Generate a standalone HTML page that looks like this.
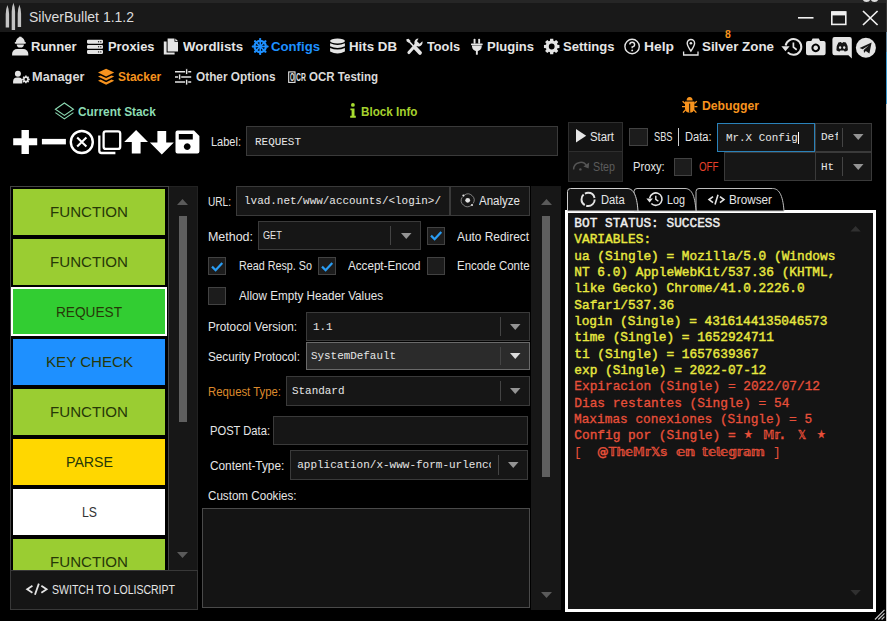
<!DOCTYPE html>
<html lang="en">
<head>
<meta charset="utf-8">
<title>SilverBullet 1.1.2</title>
<style>
html,body{margin:0;padding:0;background:#000;}
body{width:887px;height:621px;position:relative;overflow:hidden;font-family:"Liberation Sans",sans-serif;}
.b{position:absolute;box-sizing:border-box;}
.i{position:absolute;display:block;overflow:visible;}
.t{position:absolute;white-space:pre;transform-origin:0 50%;display:block;}
.c{position:absolute;overflow:hidden;}
</style>
</head>
<body>
<div class="b " style="left:0px;top:0px;width:887px;height:32px;background:#191919;"></div>
<div class="b " style="left:0px;top:0px;width:887px;height:2.6px;background:#262626;"></div>
<div class="b " style="left:246px;top:125.8px;width:312px;height:30px;background:#161616;border:1px solid #3a3a3a;"></div>
<div class="b " style="left:168px;top:186px;width:30px;height:385px;background:#171717;border:1px solid #222;"></div>
<div class="b " style="left:10px;top:186px;width:158.8px;height:385px;background:#000;border:1px solid #444;"></div>
<div class="b " style="left:12.8px;top:188.5px;width:152.6px;height:46px;background:#9acd32;"></div>
<div class="b " style="left:12.8px;top:238.58px;width:152.6px;height:46px;background:#9acd32;"></div>
<div class="b " style="left:10.6px;top:287.06px;width:156.6px;height:49.2px;background:#ffffff;"></div>
<div class="b " style="left:12.8px;top:289.06px;width:152.4px;height:45.2px;background:#32cd32;"></div>
<div class="b " style="left:12.8px;top:338.74px;width:152.6px;height:46px;background:#1e90ff;"></div>
<div class="b " style="left:12.8px;top:388.82px;width:152.6px;height:46px;background:#9acd32;"></div>
<div class="b " style="left:12.8px;top:438.9px;width:152.6px;height:46px;background:#ffd700;"></div>
<div class="b " style="left:12.8px;top:488.98px;width:152.6px;height:46px;background:#ffffff;"></div>
<div class="b " style="left:12.8px;top:539.06px;width:152.6px;height:30.94px;background:#9acd32;"></div>
<div class="b " style="left:179px;top:215.6px;width:8px;height:206.4px;background:#5f5f5f;"></div>
<div class="b " style="left:10.2px;top:570px;width:187.8px;height:39.5px;background:#151515;border:1px solid #383838;"></div>
<div class="b " style="left:236px;top:186px;width:214px;height:29.5px;background:#161616;border:1px solid #3a3a3a;"></div>
<div class="b " style="left:450.3px;top:186px;width:79.5px;height:29.5px;background:#161616;border:1px solid #3a3a3a;"></div>
<div class="b " style="left:257.6px;top:221.3px;width:163px;height:29px;background:#161616;border:1px solid #3a3a3a;"></div>
<div class="b " style="left:390px;top:226.3px;width:1px;height:19px;background:#444;"></div>
<div class="b " style="left:426.8px;top:226.9px;width:18.3px;height:18.3px;background:#1c1c1c;border:1px solid #424242;"></div>
<div class="b " style="left:208.1px;top:257px;width:18.3px;height:18.3px;background:#1c1c1c;border:1px solid #424242;"></div>
<div class="b " style="left:317.8px;top:257px;width:18.3px;height:18.3px;background:#1c1c1c;border:1px solid #424242;"></div>
<div class="b " style="left:426.8px;top:257px;width:18.3px;height:18.3px;background:#1c1c1c;border:1px solid #424242;"></div>
<div class="b " style="left:208.1px;top:286.8px;width:18.3px;height:18.3px;background:#1c1c1c;border:1px solid #424242;"></div>
<div class="b " style="left:305.5px;top:311.7px;width:224.3px;height:29.3px;background:#161616;border:1px solid #3a3a3a;"></div>
<div class="b " style="left:499.5px;top:316.7px;width:1px;height:19.3px;background:#444;"></div>
<div class="b " style="left:305.5px;top:341.5px;width:224.3px;height:28.8px;background:#2b2b2b;border:1px solid #6a6a6a;"></div>
<div class="b " style="left:499.5px;top:346.5px;width:1px;height:18.8px;background:#444;"></div>
<div class="b " style="left:285.5px;top:376.3px;width:244.3px;height:29.3px;background:#161616;border:1px solid #3a3a3a;"></div>
<div class="b " style="left:499.5px;top:381.3px;width:1px;height:19.3px;background:#444;"></div>
<div class="b " style="left:273.4px;top:416px;width:254.3px;height:29px;background:#161616;border:1px solid #3a3a3a;"></div>
<div class="b " style="left:289.7px;top:450.4px;width:238px;height:29.3px;background:#161616;border:1px solid #3a3a3a;"></div>
<div class="b " style="left:497.5px;top:455.4px;width:1px;height:19.3px;background:#444;"></div>
<div class="b " style="left:202px;top:508px;width:327.7px;height:100px;background:#141414;border:1px solid #4a4a4a;"></div>
<div class="b " style="left:531.3px;top:186px;width:29.7px;height:423.5px;background:#171717;"></div>
<div class="b " style="left:542px;top:215.8px;width:8.1px;height:261px;background:#5f5f5f;"></div>
<div class="b " style="left:568.1px;top:122.2px;width:55.1px;height:29.6px;background:#131313;border:1px solid #2e2e2e;"></div>
<div class="b " style="left:568.1px;top:151px;width:55.1px;height:30.6px;background:#1b1b1b;border:1px solid #2e2e2e;"></div>
<div class="b " style="left:629.3px;top:127.8px;width:18.3px;height:18.3px;background:#1c1c1c;border:1px solid #424242;"></div>
<div class="b " style="left:678.2px;top:128px;width:1.2px;height:17.5px;background:#d0d0d0;"></div>
<div class="b " style="left:716.9px;top:122.5px;width:98px;height:29.5px;background:#161616;border:1px solid #2a82ba;"></div>
<div class="b " style="left:798.3px;top:132px;width:1px;height:12.2px;background:#fff;"></div>
<div class="b " style="left:815.4px;top:122.5px;width:56.8px;height:29.5px;background:#161616;border:1px solid #3a3a3a;"></div>
<div class="b " style="left:842.1px;top:127.5px;width:1px;height:19.5px;background:#444;"></div>
<div class="b " style="left:674px;top:157.8px;width:18.3px;height:18.3px;background:#1c1c1c;border:1px solid #424242;"></div>
<div class="b " style="left:724.4px;top:152.4px;width:91.5px;height:29px;background:#161616;border:1px solid #3a3a3a;"></div>
<div class="b " style="left:815.4px;top:152.4px;width:56.8px;height:29px;background:#161616;border:1px solid #3a3a3a;"></div>
<div class="b " style="left:842.1px;top:157.4px;width:1px;height:19px;background:#444;"></div>
<div class="b " style="left:565.3px;top:210px;width:310.8px;height:401.7px;background:#141414;border:3.6px solid #ffffff;"></div>
<div class="b " style="left:886px;top:0px;width:1px;height:32px;background:#383838;"></div>
<div class="b " style="left:886px;top:32px;width:1px;height:20px;background:#5e7e94;"></div>
<div class="b " style="left:886px;top:52px;width:1px;height:51.5px;background:#3f9bd0;"></div>
<div class="b " style="left:886px;top:103.5px;width:1px;height:517.5px;background:#cfcfcf;"></div>
<svg class="i" style="left:177.3px;top:198.5px;" width="11" height="6" viewBox="0 0 11 6"><path d="M0 6 L5.5 0 L11 6Z" fill="#5a5a5a"/></svg>
<svg class="i" style="left:177.3px;top:552px;" width="11" height="6" viewBox="0 0 11 6"><path d="M0 0 L5.5 6 L11 0Z" fill="#5a5a5a"/></svg>
<svg class="i" style="left:401.25px;top:233.0px;" width="10.5" height="6" viewBox="0 0 10.5 6"><path d="M0 0 L10.5 0 L5.25 6Z" fill="#949494"/></svg>
<svg class="i" style="left:429.8px;top:230.4px;" width="12.3" height="11.3" viewBox="0 0 12 10"><path d="M1 5 L4.5 8.5 L11 1.5" fill="none" stroke="#2a9df4" stroke-width="2.2"/></svg>
<svg class="i" style="left:211.1px;top:260.5px;" width="12.3" height="11.3" viewBox="0 0 12 10"><path d="M1 5 L4.5 8.5 L11 1.5" fill="none" stroke="#2a9df4" stroke-width="2.2"/></svg>
<svg class="i" style="left:320.8px;top:260.5px;" width="12.3" height="11.3" viewBox="0 0 12 10"><path d="M1 5 L4.5 8.5 L11 1.5" fill="none" stroke="#2a9df4" stroke-width="2.2"/></svg>
<svg class="i" style="left:509.75px;top:323.55px;" width="10.5" height="6" viewBox="0 0 10.5 6"><path d="M0 0 L10.5 0 L5.25 6Z" fill="#949494"/></svg>
<svg class="i" style="left:509.75px;top:353.1px;" width="10.5" height="6" viewBox="0 0 10.5 6"><path d="M0 0 L10.5 0 L5.25 6Z" fill="#dcdcdc"/></svg>
<svg class="i" style="left:509.75px;top:388.15px;" width="10.5" height="6" viewBox="0 0 10.5 6"><path d="M0 0 L10.5 0 L5.25 6Z" fill="#949494"/></svg>
<svg class="i" style="left:507.75px;top:462.25px;" width="10.5" height="6" viewBox="0 0 10.5 6"><path d="M0 0 L10.5 0 L5.25 6Z" fill="#949494"/></svg>
<svg class="i" style="left:540.5px;top:198.5px;" width="11" height="6" viewBox="0 0 11 6"><path d="M0 6 L5.5 0 L11 6Z" fill="#5a5a5a"/></svg>
<svg class="i" style="left:540.5px;top:592px;" width="11" height="6" viewBox="0 0 11 6"><path d="M0 0 L5.5 6 L11 0Z" fill="#5a5a5a"/></svg>
<svg class="i" style="left:575.6px;top:129.3px;" width="10.2" height="13.4" viewBox="0 0 10.2 13.4"><path d="M0 0 L10.2 6.7 L0 13.4Z" fill="#e6e6e6"/></svg>
<svg class="i" style="left:852.75px;top:134.45px;" width="10.5" height="6" viewBox="0 0 10.5 6"><path d="M0 0 L10.5 0 L5.25 6Z" fill="#949494"/></svg>
<svg class="i" style="left:852.75px;top:164.1px;" width="10.5" height="6" viewBox="0 0 10.5 6"><path d="M0 0 L10.5 0 L5.25 6Z" fill="#949494"/></svg>
<svg class="i" style="left:0;top:0" width="887" height="621" viewBox="0 0 887 621"><path d="M696 211 L696 191.5 Q696 188.5 699 188.5 L772.5 188.5 C778.5 188.5 782.8 194 784 211 Z" fill="#000" stroke="#bdbdbd" stroke-width="1"/><path d="M634 211 L634 191.5 Q634 188.5 637 188.5 L685 188.5 C691 188.5 694.8 194 696 211 Z" fill="#000" stroke="#bdbdbd" stroke-width="1"/><path d="M567.5 211 L567.5 191.5 Q567.5 188.5 570.5 188.5 L627 188.5 C633 188.5 636.8 194 638 211 Z" fill="#141414" stroke="#d0d0d0" stroke-width="1"/></svg>
<svg class="i" style="left:850.4px;top:226px;" width="11.2" height="5.6" viewBox="0 0 11 6"><path d="M0 6 L5.5 0 L11 6Z" fill="#303030"/></svg>
<svg class="i" style="left:850.4px;top:590px;" width="11.2" height="5.6" viewBox="0 0 11 6"><path d="M0 0 L5.5 6 L11 0Z" fill="#303030"/></svg>
<svg class="i" style="left:874.2px;top:609.3px;" width="10.5" height="10.5" viewBox="0 0 11 11"><path d="M1 11 L11 1 M4.5 11 L11 4.5 M8 11 L11 8" stroke="#c8c8c8" stroke-width="1.2"/></svg>
<svg class="i" style="left:0;top:0" width="887" height="621" viewBox="0 0 887 621"><path d="M5.7 27.4 L5.7 14.1 Q6.1 8.1 7.4 5.1 Q8.7 8.1 9.1 14.1 L9.1 27.4 Z" fill="#c4c4c4"/><path d="M11.7 30.1 L11.7 11.7 Q12.1 5.7 13.4 2.7 Q14.7 5.7 15.1 11.7 L15.1 30.1 Z" fill="#c4c4c4"/><path d="M17.7 27 L17.7 13.7 Q18.1 7.7 19.4 4.7 Q20.7 7.7 21.1 13.7 L21.1 27 Z" fill="#c4c4c4"/><path d="M798 17.8 H813.5" stroke="#f0f0f0" stroke-width="1.6"/><rect x="831.8" y="12" width="14" height="12.4" fill="none" stroke="#f0f0f0" stroke-width="1.6"/><rect x="831.8" y="11.4" width="14" height="4" fill="#f0f0f0"/><path d="M863 11 L877.6 25 M877.6 11 L863 25" stroke="#f0f0f0" stroke-width="1.7"/><circle cx="866.5" cy="-2" r="4" fill="#ddd"/><circle cx="874.5" cy="-2" r="4" fill="#ddd"/><g fill="#e4e4e4"><path d="M15.8 42.3 A4.5 5.2 0 0 1 24.8 42.3 Z"/><rect x="19.2" y="36.7" width="2.2" height="3"/><rect x="14.7" y="41.9" width="11.2" height="1.8" rx="0.9"/><path d="M16.7 44.5 H23.9 A3.6 3.1 0 0 1 16.7 44.5 Z"/><path d="M12.1 55.6 V54 A5 5 0 0 1 17.1 49 H23.3 A5 5 0 0 1 28.3 54 V55.6 Z"/></g><rect x="87" y="39.8" width="16" height="3.9" rx="1.1" fill="#e4e4e4"/><circle cx="98.6" cy="41.7" r="0.7" fill="#222"/><circle cx="100.8" cy="41.7" r="0.7" fill="#222"/><rect x="87" y="44.9" width="16" height="3.9" rx="1.1" fill="#e4e4e4"/><circle cx="98.6" cy="46.8" r="0.7" fill="#222"/><circle cx="100.8" cy="46.8" r="0.7" fill="#222"/><rect x="87" y="50.0" width="16" height="3.9" rx="1.1" fill="#e4e4e4"/><circle cx="98.6" cy="51.9" r="0.7" fill="#222"/><circle cx="100.8" cy="51.9" r="0.7" fill="#222"/><g fill="#e4e4e4"><path d="M167.6 38.5 H174.5 V41.8 H178 V51.6 H167.6 Z"/><path d="M175.3 38.6 L177.9 41.1 H175.3 Z"/><path d="M163.8 41.6 H166.6 V52.6 H174.6 V54.4 H163.8 Z"/></g><g stroke="#1e90ff" fill="none"><circle cx="260.2" cy="46.5" r="5.7" stroke-width="2.2"/><g stroke-width="1.6"><path d="M260.2 46.5 L268.10 46.50" /><path d="M260.2 46.5 L265.79 52.09" /><path d="M260.2 46.5 L260.20 54.40" /><path d="M260.2 46.5 L254.61 52.09" /><path d="M260.2 46.5 L252.30 46.50" /><path d="M260.2 46.5 L254.61 40.91" /><path d="M260.2 46.5 L260.20 38.60" /><path d="M260.2 46.5 L265.79 40.91" /></g><circle cx="267.60" cy="46.50" r="1.1" fill="#1e90ff" stroke="none"/><circle cx="265.43" cy="51.73" r="1.1" fill="#1e90ff" stroke="none"/><circle cx="260.20" cy="53.90" r="1.1" fill="#1e90ff" stroke="none"/><circle cx="254.97" cy="51.73" r="1.1" fill="#1e90ff" stroke="none"/><circle cx="252.80" cy="46.50" r="1.1" fill="#1e90ff" stroke="none"/><circle cx="254.97" cy="41.27" r="1.1" fill="#1e90ff" stroke="none"/><circle cx="260.20" cy="39.10" r="1.1" fill="#1e90ff" stroke="none"/><circle cx="265.43" cy="41.27" r="1.1" fill="#1e90ff" stroke="none"/><circle cx="260.2" cy="46.5" r="1.8" fill="#1e90ff" stroke="none"/></g><g fill="#e4e4e4"><ellipse cx="337.5" cy="41" rx="7.4" ry="2.4"/><path d="M330.1 43.2 Q337.5 46.6 344.9 43.2 V46.2 Q337.5 49.8 330.1 46.2 Z"/><path d="M330.1 47.9 Q337.5 51.3 344.9 47.9 V51.6 Q337.5 55.6 330.1 51.6 Z"/></g><g stroke="#e4e4e4" stroke-linecap="round" fill="none"><path d="M408 40.4 L413.4 46" stroke-width="1.7" stroke-linecap="butt"/><path d="M414.8 47.4 L420 52.9" stroke-width="3.8"/><path d="M416.8 43.8 L408.9 52.6" stroke-width="3"/></g><path d="M406.3 39.2 L408.6 38.7 L410.6 40.9 L408.8 42.8 L406.6 41.2 Z" fill="#e4e4e4"/><path d="M422.4 41.3 A4.1 4.1 0 1 1 418.5 38.4 L417 41.2 L419.7 43.7 Z" fill="#e4e4e4"/><g fill="#e4e4e4"><rect x="473.6" y="38.8" width="1.9" height="5" rx="0.8"/><rect x="478.2" y="38.8" width="1.9" height="5" rx="0.8"/><rect x="471" y="43.4" width="11.7" height="1.8" rx="0.6"/><path d="M472 45.4 H481.7 V46.6 A4.85 4.6 0 0 1 472 46.6 Z"/><rect x="475.9" y="50" width="1.9" height="4.7"/></g><path d="M559.45 44.96 L559.45 48.04 L557.44 48.24 L556.99 49.33 L558.27 50.89 L556.09 53.07 L554.53 51.79 L553.44 52.24 L553.24 54.25 L550.16 54.25 L549.96 52.24 L548.87 51.79 L547.31 53.07 L545.13 50.89 L546.41 49.33 L545.96 48.24 L543.95 48.04 L543.95 44.96 L545.96 44.76 L546.41 43.67 L545.13 42.11 L547.31 39.93 L548.87 41.21 L549.96 40.76 L550.16 38.75 L553.24 38.75 L553.44 40.76 L554.53 41.21 L556.09 39.93 L558.27 42.11 L556.99 43.67 L557.44 44.76 Z M554.6 46.5 A2.9 2.9 0 1 0 548.8 46.5 A2.9 2.9 0 1 0 554.6 46.5 Z" fill="#e4e4e4" fill-rule="evenodd"/><circle cx="632.1" cy="46.5" r="7.2" fill="none" stroke="#e4e4e4" stroke-width="1.4"/><path d="M629.8 44.6 A2.4 2.3 0 1 1 632.2 46.9 V48.3" fill="none" stroke="#e4e4e4" stroke-width="1.4"/><circle cx="632.2" cy="50.4" r="0.95" fill="#e4e4e4"/><path d="M690.9 51 C688.5 47.5 687.2 45.4 687.2 43.2 A3.7 3.7 0 0 1 694.6 43.2 C694.6 45.4 693.3 47.5 690.9 51 Z" fill="none" stroke="#e4e4e4" stroke-width="1.4"/><circle cx="690.9" cy="43.2" r="1.3" fill="#e4e4e4"/><path d="M683.6 51.6 V55 H698 V51.6" fill="none" stroke="#e4e4e4" stroke-width="1.3"/><path d="M785.62 45.53 A7.9 7.9 0 1 1 787.71 52.43" fill="none" stroke="#e4e4e4" stroke-width="2.0"/><path d="M781.37 46.25 L789.63 46.25 L785.50 51.24 Z" fill="#e4e4e4"/><path d="M793.4 42.55 V47.10 L796.72 49.74" fill="none" stroke="#e4e4e4" stroke-width="1.70"/><path d="M808 41 H811.3 L812.6 38.4 H818.8 L820.1 41 H823.6 Q825.6 41 825.6 43 V53.3 Q825.6 55.3 823.6 55.3 H808 Q806 55.3 806 53.3 V43 Q806 41 808 41 Z M815.7 43.6 A4.3 4.3 0 1 0 815.71 43.6 Z M815.7 45.6 A2.3 2.3 0 1 1 815.69 45.6 Z" fill="#e4e4e4" fill-rule="evenodd"/><path d="M834.6 37 H849.6 Q851.8 37 851.8 39.2 V58.6 L848.4 55.3 H834.6 Q832.4 55.3 832.4 53.1 V39.2 Q832.4 37 834.6 37 Z" fill="#e4e4e4"/><path d="M836.4 50.2 Q836.4 45.2 838.4 42.6 Q840 41.9 841 42 L841.3 42.8 H843 L843.3 42 Q844.3 41.9 845.9 42.6 Q847.9 45.2 847.9 50.2 Q846.3 51.6 844.6 51.6 L843.9 50.5 H840.4 L839.7 51.6 Q838 51.6 836.4 50.2 Z" fill="#151515"/><ellipse cx="840.1" cy="47.6" rx="1.15" ry="1.3" fill="#e4e4e4"/><ellipse cx="844.2" cy="47.6" rx="1.15" ry="1.3" fill="#e4e4e4"/><circle cx="865.9" cy="47.7" r="10" fill="#e4e4e4"/><path d="M859.6 48 L871.6 42.6 L869.4 53.6 L865.8 51 L864 53 L863.7 50 L868.8 45.4 L862.6 49.3 Z" fill="#151515"/><g fill="#e4e4e4"><circle cx="17.9" cy="73.7" r="3"/><path d="M13.1 83.4 V81.6 A4 4 0 0 1 17.1 77.6 H19 A4 4 0 0 1 22.3 79.4 V83.4 Z"/></g><path d="M29.73 78.64 L29.73 80.16 L28.68 80.24 L28.46 80.77 L29.14 81.57 L28.07 82.64 L27.27 81.96 L26.74 82.18 L26.66 83.23 L25.14 83.23 L25.06 82.18 L24.53 81.96 L23.73 82.64 L22.66 81.57 L23.34 80.77 L23.12 80.24 L22.07 80.16 L22.07 78.64 L23.12 78.56 L23.34 78.03 L22.66 77.23 L23.73 76.16 L24.53 76.84 L25.06 76.62 L25.14 75.57 L26.66 75.57 L26.74 76.62 L27.27 76.84 L28.07 76.16 L29.14 77.23 L28.46 78.03 L28.68 78.56 Z M27.2 79.4 A1.3 1.3 0 1 0 24.6 79.4 A1.3 1.3 0 1 0 27.2 79.4 Z" fill="#e4e4e4" fill-rule="evenodd"/><g fill="#f7931e"><path d="M106.1 68.8 L114.2 72.6 L106.1 76.4 L98 72.6 Z"/><path d="M98 76.6 L100.6 75.4 L106.1 78 L111.6 75.4 L114.2 76.6 L106.1 80.5 Z"/><path d="M98 80.8 L100.6 79.6 L106.1 82.2 L111.6 79.6 L114.2 80.8 L106.1 84.8 Z"/></g><g stroke="#e4e4e4" stroke-width="1.5"><path d="M175 71.7 H191.2 M175 76.9 H191.2 M175 82.1 H191.2"/></g><g fill="#e4e4e4" stroke="#000" stroke-width="0.8"><rect x="185.6" y="68.8" width="2.2" height="5.8"/><rect x="178.6" y="74" width="2.2" height="5.8"/><rect x="185.6" y="79.2" width="2.2" height="5.8"/></g><rect x="288.7" y="71.9" width="6.3" height="10.5" fill="none" stroke="#e4e4e4" stroke-width="1.1"/><g fill="none" stroke="#8ddcb4" stroke-width="1.1"><path d="M64.4 103 L73.4 109.2 L64.4 115.4 L55.4 109.2 Z"/><path d="M55.4 112.6 L64.4 118.9 L73.4 112.6"/></g><g fill="#a8de30"><circle cx="352.9" cy="104.9" r="1.9"/><path d="M350.4 108.4 H354.5 V115.8 H355.8 V117.8 H350.2 V115.8 H351.6 V110.3 H350.4 Z"/></g><g fill="#f7931e"><path d="M686.6 100.6 A3 3.6 0 0 1 692.6 100.6 Z"/><path d="M685 101.6 H694.4 V108.6 A4.7 4 0 0 1 685 108.6 Z"/></g><g stroke="#f7931e" stroke-width="1.3" fill="none"><path d="M685 103.4 L682.6 101.2 M694.4 103.4 L696.8 101.2 M685 106.6 H682 M694.4 106.6 H697.4 M685.6 109.8 L683 112.6 M693.8 109.8 L696.4 112.6"/></g><path d="M689.7 103.6 V112.4" stroke="#000" stroke-width="1"/><path d="M13.2 138.3 H21.5 V129.9 H28.9 V138.3 H37.2 V145.3 H28.9 V154.1 H21.5 V145.3 H13.2 Z" fill="#ffffff"/><rect x="41.9" y="138.9" width="24" height="5.5" fill="#ffffff"/><circle cx="81.8" cy="142" r="11" fill="none" stroke="#ffffff" stroke-width="2.4"/><path d="M77.2 137.6 L86.4 146.4 M86.4 137.6 L77.2 146.4" stroke="#ffffff" stroke-width="2.1"/><rect x="103.6" y="131.3" width="16.6" height="17.6" rx="2.2" fill="none" stroke="#ffffff" stroke-width="2.3"/><path d="M99.3 135.6 V150.8 Q99.3 153 101.5 153 H115.4" fill="none" stroke="#ffffff" stroke-width="2.3"/><path d="M136.1 130 L148 141.9 H140.6 V153.6 H131.8 V141.9 H124.2 Z" fill="#ffffff"/><path d="M161.8 154.6 L173.8 142.6 H166.2 V131 H157.4 V142.6 H149.9 Z" fill="#ffffff"/><path d="M177.5 130.6 H194 L199.4 136 V151.6 Q199.4 153.6 197.4 153.6 H177.5 Q175.5 153.6 175.5 151.6 V132.6 Q175.5 130.6 177.5 130.6 Z M178.8 134 V139.6 H192.8 V134 Z M187.2 143.2 A3.4 3.4 0 1 0 187.21 143.2 Z" fill="#ffffff" fill-rule="evenodd"/><path d="M32.44 585.73 L27.20 589.20 L32.44 592.67 M41.36 585.73 L46.60 589.20 L41.36 592.67 M38.84 583.60 L34.96 594.80" fill="none" stroke="#e4e4e4" stroke-width="1.8"/><path d="M713.05 196.56 L709.00 199.60 L713.05 202.64 M719.95 196.56 L724.00 199.60 L719.95 202.64 M718.00 194.70 L715.00 204.50" fill="none" stroke="#e4e4e4" stroke-width="1.6"/><circle cx="467.7" cy="200.3" r="2.4" fill="#e4e4e4"/><path d="M464.2 195.2 A6.2 6.2 0 0 1 473.2 203.4" fill="none" stroke="#9a9a9a" stroke-width="0.8"/><path d="M471.2 205.4 A6.2 6.2 0 0 1 462.2 197.2" fill="none" stroke="#9a9a9a" stroke-width="0.8"/><circle cx="463.4" cy="195.6" r="1.1" fill="#e4e4e4"/><circle cx="472" cy="205" r="1.1" fill="#e4e4e4"/><path d="M573.6 169.6 A7 7 0 0 1 586.8 166.2" fill="none" stroke="#555" stroke-width="1.5"/><path d="M589.2 162.6 L588.6 168.6 L583.4 166.6 Z" fill="#555"/><circle cx="580.4" cy="169.4" r="1.2" fill="#555"/><circle cx="588.1" cy="199.4" r="6.6" fill="none" stroke="#e4e4e4" stroke-width="1.9" stroke-dasharray="12.2 1.6"/><path d="M649.69 198.02 A6.2 6.2 0 1 1 651.34 203.44" fill="none" stroke="#e4e4e4" stroke-width="1.6"/><path d="M646.36 198.59 L652.84 198.59 L649.60 202.51 Z" fill="#e4e4e4"/><path d="M655.8 195.69 V199.30 L658.40 201.33" fill="none" stroke="#e4e4e4" stroke-width="1.36"/></svg>
<span class="t" id="t0" style="left:29px;top:7.00px;height:20px;line-height:20px;font-size:14.5px;color:#dcdcdc;font-family:'Liberation Sans',sans-serif;transform:scaleX(0.9650);">SilverBullet 1.1.2</span>
<span class="t" id="t1" style="left:31.4px;top:38.00px;height:18px;line-height:18px;font-size:13px;color:#e6e6e6;font-family:'Liberation Sans',sans-serif;font-weight:bold;transform:scaleX(1.0022);">Runner</span>
<span class="t" id="t2" style="left:107.5px;top:38.00px;height:18px;line-height:18px;font-size:13px;color:#e6e6e6;font-family:'Liberation Sans',sans-serif;font-weight:bold;transform:scaleX(0.9897);">Proxies</span>
<span class="t" id="t3" style="left:182.6px;top:38.00px;height:18px;line-height:18px;font-size:13px;color:#e6e6e6;font-family:'Liberation Sans',sans-serif;font-weight:bold;transform:scaleX(1.0169);">Wordlists</span>
<span class="t" id="t4" style="left:270.5px;top:38.00px;height:18px;line-height:18px;font-size:13px;color:#1e90ff;font-family:'Liberation Sans',sans-serif;font-weight:bold;transform:scaleX(1.0126);">Configs</span>
<span class="t" id="t5" style="left:349px;top:38.00px;height:18px;line-height:18px;font-size:13px;color:#e6e6e6;font-family:'Liberation Sans',sans-serif;font-weight:bold;transform:scaleX(1.0223);">Hits DB</span>
<span class="t" id="t6" style="left:426.8px;top:38.00px;height:18px;line-height:18px;font-size:13px;color:#e6e6e6;font-family:'Liberation Sans',sans-serif;font-weight:bold;transform:scaleX(0.9791);">Tools</span>
<span class="t" id="t7" style="left:487px;top:38.00px;height:18px;line-height:18px;font-size:13px;color:#e6e6e6;font-family:'Liberation Sans',sans-serif;font-weight:bold;transform:scaleX(1.0010);">Plugins</span>
<span class="t" id="t8" style="left:563px;top:38.00px;height:18px;line-height:18px;font-size:13px;color:#e6e6e6;font-family:'Liberation Sans',sans-serif;font-weight:bold;transform:scaleX(1.0040);">Settings</span>
<span class="t" id="t9" style="left:643.7px;top:38.00px;height:18px;line-height:18px;font-size:13px;color:#e6e6e6;font-family:'Liberation Sans',sans-serif;font-weight:bold;transform:scaleX(1.0649);">Help</span>
<span class="t" id="t10" style="left:702px;top:38.00px;height:18px;line-height:18px;font-size:13px;color:#e6e6e6;font-family:'Liberation Sans',sans-serif;font-weight:bold;transform:scaleX(1.0274);">Silver Zone</span>
<span class="t" id="t11" style="left:725.4px;top:28.20px;height:14px;line-height:14px;font-size:10px;color:#f7931e;font-family:'Liberation Sans',sans-serif;font-weight:bold;transform:scaleX(1.0427);">8</span>
<span class="t" id="t12" style="left:32px;top:69.00px;height:17px;line-height:17px;font-size:12px;color:#dadada;font-family:'Liberation Sans',sans-serif;font-weight:bold;transform:scaleX(1.0636);">Manager</span>
<span class="t" id="t13" style="left:118.4px;top:69.00px;height:17px;line-height:17px;font-size:12px;color:#f7931e;font-family:'Liberation Sans',sans-serif;font-weight:bold;transform:scaleX(0.9960);">Stacker</span>
<span class="t" id="t14" style="left:195.5px;top:69.00px;height:17px;line-height:17px;font-size:12px;color:#dadada;font-family:'Liberation Sans',sans-serif;font-weight:bold;transform:scaleX(0.9855);">Other Options</span>
<span class="t" id="t15" style="left:308.5px;top:69.00px;height:17px;line-height:17px;font-size:12px;color:#dadada;font-family:'Liberation Sans',sans-serif;font-weight:bold;transform:scaleX(0.9613);">OCR Testing</span>
<span class="t" id="t16" style="left:77.8px;top:104.00px;height:17px;line-height:17px;font-size:12px;color:#8ddcb4;font-family:'Liberation Sans',sans-serif;font-weight:bold;transform:scaleX(0.9885);">Current Stack</span>
<span class="t" id="t17" style="left:361px;top:104.00px;height:17px;line-height:17px;font-size:12px;color:#a6d22e;font-family:'Liberation Sans',sans-serif;font-weight:bold;transform:scaleX(0.9739);">Block Info</span>
<span class="t" id="t18" style="left:702px;top:98.00px;height:17px;line-height:17px;font-size:12px;color:#f7931e;font-family:'Liberation Sans',sans-serif;font-weight:bold;transform:scaleX(1.0176);">Debugger</span>
<span class="t" id="t19" style="left:210.7px;top:133.50px;height:17px;line-height:17px;font-size:12px;color:#e6e6e6;font-family:'Liberation Sans',sans-serif;transform:scaleX(0.9173);">Label:</span>
<span class="t" id="t20" style="left:255px;top:134.50px;height:15px;line-height:15px;font-size:11px;color:#e6e6e6;font-family:'Liberation Mono',monospace;transform:scaleX(0.9953);">REQUEST</span>
<span class="t" id="t21" style="left:50.0px;top:200.70px;height:21px;line-height:21px;font-size:15px;color:#263808;font-family:'Liberation Sans',sans-serif;transform:scaleX(1.0065);">FUNCTION</span>
<span class="t" id="t22" style="left:50.0px;top:250.78px;height:21px;line-height:21px;font-size:15px;color:#263808;font-family:'Liberation Sans',sans-serif;transform:scaleX(1.0065);">FUNCTION</span>
<span class="t" id="t23" style="left:56.0px;top:300.86px;height:21px;line-height:21px;font-size:15px;color:#263808;font-family:'Liberation Sans',sans-serif;transform:scaleX(0.9101);">REQUEST</span>
<span class="t" id="t24" style="left:45.5px;top:350.94px;height:21px;line-height:21px;font-size:15px;color:#263808;font-family:'Liberation Sans',sans-serif;transform:scaleX(1.0067);">KEY CHECK</span>
<span class="t" id="t25" style="left:50.0px;top:401.02px;height:21px;line-height:21px;font-size:15px;color:#263808;font-family:'Liberation Sans',sans-serif;transform:scaleX(1.0065);">FUNCTION</span>
<span class="t" id="t26" style="left:65.5px;top:451.10px;height:21px;line-height:21px;font-size:15px;color:#263808;font-family:'Liberation Sans',sans-serif;transform:scaleX(0.9447);">PARSE</span>
<span class="t" id="t27" style="left:81.5px;top:501.18px;height:21px;line-height:21px;font-size:15px;color:#333;font-family:'Liberation Sans',sans-serif;transform:scaleX(0.8170);">LS</span>
<span class="t" id="t28" style="left:50.0px;top:551.26px;height:21px;line-height:21px;font-size:15px;color:#263808;font-family:'Liberation Sans',sans-serif;transform:scaleX(1.0065);">FUNCTION</span>
<span class="t" id="t29" style="left:52.3px;top:581.50px;height:17px;line-height:17px;font-size:12px;color:#e6e6e6;font-family:'Liberation Sans',sans-serif;transform:scaleX(0.8770);">SWITCH TO LOLISCRIPT</span>
<span class="t" id="t30" style="left:207.8px;top:194.30px;height:17px;line-height:17px;font-size:12px;color:#e6e6e6;font-family:'Liberation Sans',sans-serif;transform:scaleX(0.8411);">URL:</span>
<span class="t" id="t31" style="left:244.2px;top:194.30px;height:15px;line-height:15px;font-size:11px;color:#e6e6e6;font-family:'Liberation Mono',monospace;transform:scaleX(0.9947);">lvad.net/www/accounts/&lt;login&gt;/</span>
<span class="t" id="t32" style="left:478.7px;top:193.30px;height:17px;line-height:17px;font-size:12px;color:#e6e6e6;font-family:'Liberation Sans',sans-serif;transform:scaleX(0.9601);">Analyze</span>
<span class="t" id="t33" style="left:207.5px;top:228.70px;height:17px;line-height:17px;font-size:12px;color:#e6e6e6;font-family:'Liberation Sans',sans-serif;transform:scaleX(1.0378);">Method:</span>
<span class="t" id="t34" style="left:263px;top:227.70px;height:15px;line-height:15px;font-size:10.5px;color:#e6e6e6;font-family:'Liberation Sans',sans-serif;transform:scaleX(0.8706);">GET</span>
<span class="t" id="t35" style="left:457px;top:228.50px;height:17px;line-height:17px;font-size:12px;color:#e6e6e6;font-family:'Liberation Sans',sans-serif;transform:scaleX(0.9903);">Auto Redirect</span>
<span class="t" id="t36" style="left:238.8px;top:258.40px;height:17px;line-height:17px;font-size:12px;color:#e6e6e6;font-family:'Liberation Sans',sans-serif;transform:scaleX(0.8969);">Read Resp. So</span>
<span class="t" id="t37" style="left:348px;top:258.40px;height:17px;line-height:17px;font-size:12px;color:#e6e6e6;font-family:'Liberation Sans',sans-serif;transform:scaleX(0.9703);">Accept-Encod</span>
<span class="t" id="t38" style="left:457px;top:258.40px;height:17px;line-height:17px;font-size:12px;color:#e6e6e6;font-family:'Liberation Sans',sans-serif;transform:scaleX(0.9532);">Encode Conte</span>
<span class="t" id="t39" style="left:238.8px;top:288.30px;height:17px;line-height:17px;font-size:12px;color:#e6e6e6;font-family:'Liberation Sans',sans-serif;transform:scaleX(0.9740);">Allow Empty Header Values</span>
<span class="t" id="t40" style="left:207.5px;top:319.00px;height:17px;line-height:17px;font-size:12px;color:#e6e6e6;font-family:'Liberation Sans',sans-serif;transform:scaleX(0.9811);">Protocol Version:</span>
<span class="t" id="t41" style="left:313px;top:319.50px;height:15px;line-height:15px;font-size:11px;color:#e6e6e6;font-family:'Liberation Mono',monospace;transform:scaleX(0.9893);">1.1</span>
<span class="t" id="t42" style="left:207.5px;top:349.30px;height:17px;line-height:17px;font-size:12px;color:#e6e6e6;font-family:'Liberation Sans',sans-serif;transform:scaleX(0.9782);">Security Protocol:</span>
<span class="t" id="t43" style="left:311px;top:348.50px;height:15px;line-height:15px;font-size:11px;color:#e6e6e6;font-family:'Liberation Mono',monospace;transform:scaleX(0.9904);">SystemDefault</span>
<span class="t" id="t44" style="left:207.5px;top:384.00px;height:17px;line-height:17px;font-size:12px;color:#dd8a2c;font-family:'Liberation Sans',sans-serif;transform:scaleX(0.9459);">Request Type:</span>
<span class="t" id="t45" style="left:291.8px;top:384.30px;height:15px;line-height:15px;font-size:11px;color:#e6e6e6;font-family:'Liberation Mono',monospace;transform:scaleX(0.9941);">Standard</span>
<span class="t" id="t46" style="left:209.6px;top:423.40px;height:17px;line-height:17px;font-size:12px;color:#e6e6e6;font-family:'Liberation Sans',sans-serif;transform:scaleX(0.9305);">POST Data:</span>
<span class="t" id="t47" style="left:209.6px;top:457.90px;height:17px;line-height:17px;font-size:12px;color:#e6e6e6;font-family:'Liberation Sans',sans-serif;transform:scaleX(0.9857);">Content-Type:</span>
<div class="c" style="left:297.2px;top:458.00px;width:194px;height:15px;"><span class="t" id="t48" style="left:0;top:0;height:15px;line-height:15px;font-size:11px;color:#e6e6e6;font-family:'Liberation Mono',monospace;">application/x-www-form-urlenco</span></div>
<span class="t" id="t49" style="left:207.5px;top:487.50px;height:17px;line-height:17px;font-size:12px;color:#e6e6e6;font-family:'Liberation Sans',sans-serif;transform:scaleX(0.9685);">Custom Cookies:</span>
<span class="t" id="t50" style="left:589.5px;top:128.60px;height:17px;line-height:17px;font-size:12px;color:#e6e6e6;font-family:'Liberation Sans',sans-serif;transform:scaleX(0.9470);">Start</span>
<span class="t" id="t51" style="left:592.5px;top:158.70px;height:17px;line-height:17px;font-size:12px;color:#5c5c5c;font-family:'Liberation Sans',sans-serif;transform:scaleX(0.8911);">Step</span>
<span class="t" id="t52" style="left:654px;top:128.60px;height:17px;line-height:17px;font-size:12px;color:#e6e6e6;font-family:'Liberation Sans',sans-serif;transform:scaleX(0.7703);">SBS</span>
<span class="t" id="t53" style="left:685.3px;top:128.60px;height:17px;line-height:17px;font-size:12px;color:#e6e6e6;font-family:'Liberation Sans',sans-serif;transform:scaleX(0.9272);">Data:</span>
<span class="t" id="t54" style="left:725.9px;top:131.00px;height:15px;line-height:15px;font-size:11px;color:#e6e6e6;font-family:'Liberation Mono',monospace;transform:scaleX(0.9886);">Mr.X Config</span>
<div class="c" style="left:821px;top:129.60px;width:16.6px;height:15px;"><span class="t" id="t55" style="left:0;top:0;height:15px;line-height:15px;font-size:11px;color:#e6e6e6;font-family:'Liberation Mono',monospace;">Def</span></div>
<span class="t" id="t56" style="left:632.6px;top:158.70px;height:17px;line-height:17px;font-size:12px;color:#e6e6e6;font-family:'Liberation Sans',sans-serif;transform:scaleX(0.9319);">Proxy:</span>
<span class="t" id="t57" style="left:699px;top:158.70px;height:17px;line-height:17px;font-size:12px;color:#e8402a;font-family:'Liberation Sans',sans-serif;transform:scaleX(0.8125);">OFF</span>
<span class="t" id="t58" style="left:821px;top:159.70px;height:15px;line-height:15px;font-size:11px;color:#e6e6e6;font-family:'Liberation Mono',monospace;">Ht</span>
<span class="t" id="t59" style="left:600.6px;top:191.70px;height:17px;line-height:17px;font-size:12px;color:#e6e6e6;font-family:'Liberation Sans',sans-serif;transform:scaleX(0.9346);">Data</span>
<span class="t" id="t60" style="left:666.5px;top:191.70px;height:17px;line-height:17px;font-size:12px;color:#e6e6e6;font-family:'Liberation Sans',sans-serif;transform:scaleX(0.8986);">Log</span>
<span class="t" id="t61" style="left:728.5px;top:191.70px;height:17px;line-height:17px;font-size:12px;color:#e6e6e6;font-family:'Liberation Sans',sans-serif;transform:scaleX(0.9769);">Browser</span>
<span class="t" id="t62" style="left:574.3px;top:214.90px;height:18px;line-height:18px;font-size:12.8px;color:#f0f0f0;font-family:'Liberation Mono',monospace;transform:scaleX(1.0000);-webkit-text-stroke:0.42px #f0f0f0;">BOT STATUS: SUCCESS</span>
<span class="t" id="t63" style="left:574.3px;top:231.25px;height:18px;line-height:18px;font-size:12.8px;color:#e8e840;font-family:'Liberation Mono',monospace;transform:scaleX(1.0000);-webkit-text-stroke:0.42px #e8e840;">VARIABLES:</span>
<span class="t" id="t64" style="left:574.3px;top:247.60px;height:18px;line-height:18px;font-size:12.8px;color:#e8e840;font-family:'Liberation Mono',monospace;transform:scaleX(1.0000);-webkit-text-stroke:0.42px #e8e840;">ua (Single) = Mozilla/5.0 (Windows</span>
<span class="t" id="t65" style="left:574.3px;top:263.95px;height:18px;line-height:18px;font-size:12.8px;color:#e8e840;font-family:'Liberation Mono',monospace;transform:scaleX(1.0000);-webkit-text-stroke:0.42px #e8e840;">NT 6.0) AppleWebKit/537.36 (KHTML,</span>
<span class="t" id="t66" style="left:574.3px;top:280.30px;height:18px;line-height:18px;font-size:12.8px;color:#e8e840;font-family:'Liberation Mono',monospace;transform:scaleX(1.0000);-webkit-text-stroke:0.42px #e8e840;">like Gecko) Chrome/41.0.2226.0</span>
<span class="t" id="t67" style="left:574.3px;top:296.65px;height:18px;line-height:18px;font-size:12.8px;color:#e8e840;font-family:'Liberation Mono',monospace;transform:scaleX(1.0000);-webkit-text-stroke:0.42px #e8e840;">Safari/537.36</span>
<span class="t" id="t68" style="left:574.3px;top:313.00px;height:18px;line-height:18px;font-size:12.8px;color:#e8e840;font-family:'Liberation Mono',monospace;transform:scaleX(1.0001);-webkit-text-stroke:0.42px #e8e840;">login (Single) = 4316144135046573</span>
<span class="t" id="t69" style="left:574.3px;top:329.35px;height:18px;line-height:18px;font-size:12.8px;color:#e8e840;font-family:'Liberation Mono',monospace;transform:scaleX(1.0000);-webkit-text-stroke:0.42px #e8e840;">time (Single) = 1652924711</span>
<span class="t" id="t70" style="left:574.3px;top:345.70px;height:18px;line-height:18px;font-size:12.8px;color:#e8e840;font-family:'Liberation Mono',monospace;transform:scaleX(1.0000);-webkit-text-stroke:0.42px #e8e840;">ti (Single) = 1657639367</span>
<span class="t" id="t71" style="left:574.3px;top:362.05px;height:18px;line-height:18px;font-size:12.8px;color:#e8e840;font-family:'Liberation Mono',monospace;transform:scaleX(1.0000);-webkit-text-stroke:0.42px #e8e840;">exp (Single) = 2022-07-12</span>
<span class="t" id="t72" style="left:574.3px;top:378.40px;height:18px;line-height:18px;font-size:12.8px;color:#e8503a;font-family:'Liberation Mono',monospace;transform:scaleX(1.0000);-webkit-text-stroke:0.3px #e8503a;">Expiracion (Single) = 2022/07/12</span>
<span class="t" id="t73" style="left:574.3px;top:394.75px;height:18px;line-height:18px;font-size:12.8px;color:#e8503a;font-family:'Liberation Mono',monospace;transform:scaleX(1.0000);-webkit-text-stroke:0.3px #e8503a;">Dias restantes (Single) = 54</span>
<span class="t" id="t74" style="left:574.3px;top:411.10px;height:18px;line-height:18px;font-size:12.8px;color:#e8503a;font-family:'Liberation Mono',monospace;transform:scaleX(1.0001);-webkit-text-stroke:0.3px #e8503a;">Maximas conexiones (Single) = 5</span>
<span class="t" id="t75" style="left:574.3px;top:427.45px;height:18px;line-height:18px;font-size:12.8px;color:#e8503a;font-family:'Liberation Mono',monospace;transform:scaleX(1.0000);-webkit-text-stroke:0.35px #e8503a;">Config por (Single) = </span>
<span class="t" id="t76" style="left:744px;top:427.45px;height:15px;line-height:15px;font-size:11px;color:#e8503a;font-family:'DejaVu Sans',sans-serif;font-weight:bold;transform:scaleX(0.8709);-webkit-text-stroke:0.3px #e8503a;">★</span>
<span class="t" id="t77" style="left:763.3px;top:426.45px;height:18px;line-height:18px;font-size:12.8px;color:#e8503a;font-family:'DejaVu Sans',sans-serif;font-weight:bold;transform:scaleX(0.8557);-webkit-text-stroke:0.3px #e8503a;">𝕄𝕣.</span>
<span class="t" id="t78" style="left:798px;top:426.45px;height:18px;line-height:18px;font-size:12.8px;color:#e8503a;font-family:'DejaVu Sans',sans-serif;font-weight:bold;transform:scaleX(0.7758);-webkit-text-stroke:0.3px #e8503a;">𝕏</span>
<span class="t" id="t79" style="left:816.6px;top:427.45px;height:15px;line-height:15px;font-size:11px;color:#e8503a;font-family:'DejaVu Sans',sans-serif;font-weight:bold;transform:scaleX(0.8709);-webkit-text-stroke:0.3px #e8503a;">★</span>
<span class="t" id="t80" style="left:574.3px;top:443.80px;height:18px;line-height:18px;font-size:12.8px;color:#e8503a;font-family:'Liberation Mono',monospace;transform:scaleX(0.9990);">[</span>
<span class="t" id="t81" style="left:597.4px;top:442.80px;height:18px;line-height:18px;font-size:12.8px;color:#e8503a;font-family:'DejaVu Sans',sans-serif;font-weight:bold;transform:scaleX(0.9060);-webkit-text-stroke:0.3px #e8503a;">@𝕋𝕙𝕖𝕄𝕣𝕏𝕤</span>
<span class="t" id="t82" style="left:676.4px;top:442.80px;height:18px;line-height:18px;font-size:12.8px;color:#e8503a;font-family:'DejaVu Sans',sans-serif;font-weight:bold;transform:scaleX(1.0676);-webkit-text-stroke:0.3px #e8503a;">𝕖𝕟</span>
<span class="t" id="t83" style="left:702.4px;top:442.80px;height:18px;line-height:18px;font-size:12.8px;color:#e8503a;font-family:'DejaVu Sans',sans-serif;font-weight:bold;transform:scaleX(0.9266);-webkit-text-stroke:0.3px #e8503a;">𝕥𝕖𝕝𝕖𝕘𝕣𝕒𝕞</span>
<span class="t" id="t84" style="left:773.2px;top:443.80px;height:18px;line-height:18px;font-size:12.8px;color:#e8503a;font-family:'Liberation Mono',monospace;transform:scaleX(0.9990);">]</span>
<span class="t" id="t85" style="left:289.7px;top:69.70px;height:15px;line-height:15px;font-size:10.5px;color:#e4e4e4;font-family:'Liberation Sans',sans-serif;font-weight:bold;transform:scaleX(0.5384);">O</span>
<span class="t" id="t86" style="left:295.7px;top:69.70px;height:15px;line-height:15px;font-size:10.5px;color:#e4e4e4;font-family:'Liberation Sans',sans-serif;font-weight:bold;transform:scaleX(0.6459);">CR</span>
</body>
</html>
